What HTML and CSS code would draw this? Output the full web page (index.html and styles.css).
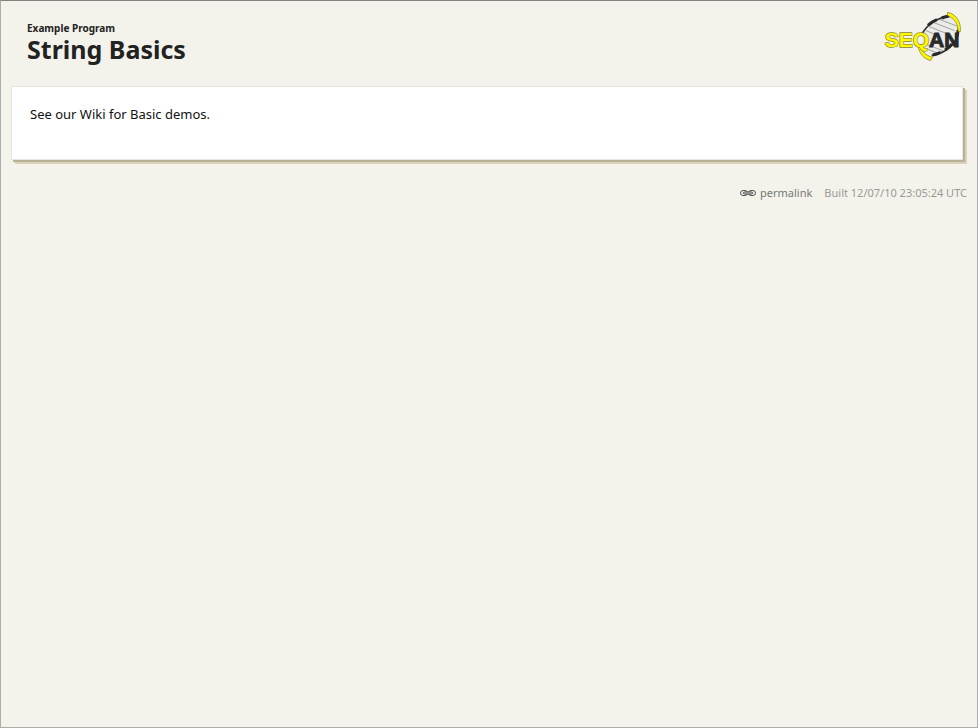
FILE: index.html
```html
<!DOCTYPE html>
<html lang="en">
<head>
<meta charset="utf-8">
<title>String Basics</title>
<link rel="stylesheet" href="styles.css">
</head>
<body>
<header class="header">
  <div class="heading">
    <p class="kind">Example Program</p>
    <h1 class="title">String Basics</h1>
  </div>
  <svg class="logo" viewBox="0 0 270 180" role="img" aria-label="SeqAn">
    <path d="M128 120C128 80 160 38 212 30L240 60C244 100 210 138 161 149Z" fill="#ebebe8"/>
    <path d="M184 40l52 20M168 50l62 24M154 62l60 24M144 74l40 16M138 112l56 22M134 124l44 17" stroke="#a2a29f" stroke-width="3"/>
    <path d="M131 86C144 60 170 38 213 30" fill="none" stroke="#303030" stroke-width="5"/>
    <path d="M150 58C158 50 167 45 177 41M191 36C199 33 206 31 214 30" fill="none" stroke="#292929" stroke-width="9"/>
    <path d="M241 66C242 108 211 139 161 149" fill="none" stroke="#303030" stroke-width="5"/>
    <path d="M164 147C173 145 181 142 188 139M201 132C209 127 216 121 222 114M240 72C240 82 238 90 235 97" fill="none" stroke="#292929" stroke-width="9"/>
    <path d="M209 19C232 24 250 45 247 77L240 76C241 53 229 38 208 28Z" fill="#fff800" stroke="#77741f" stroke-width="2"/>
    <path d="M127 118C131 137 143 148 163 154L158 164C137 158 124 143 120 121Z" fill="#fff800" stroke="#77741f" stroke-width="2"/>
    <text class="wordmark" x="20" y="122"><tspan class="wordmark-seq">SEQ</tspan><tspan class="wordmark-an">AN</tspan></text>
  </svg>
</header>
<main class="card">
  <p>See our Wiki for Basic demos.</p>
</main>
<footer class="footer">
  <a class="permalink" href="#">
    <svg class="chain" viewBox="0 0 16 8" aria-hidden="true">
      <rect x="0.5" y="1.5" width="7" height="5" rx="2.5" fill="#eee" stroke="#555"/>
      <rect x="8.5" y="1.5" width="7" height="5" rx="2.5" fill="#eee" stroke="#555"/>
      <rect x="3.5" y="3" width="9" height="2" rx="1" fill="#ddd" stroke="#444"/>
    </svg>
    <span>permalink</span>
  </a>
  <span>Built 12/07/10 23:05:24 UTC</span>
</footer>
</body>
</html>
```
FILE: styles.css
```css
* {
  box-sizing: border-box;
}

body {
  margin: 0;
  min-height: 100vh;
  padding: 4px 10px 0;
  border: 1px solid #adadad;
  border-top-color: #857f7f;
  background: #f4f3eb;
  color: #222;
  font-family: "Noto Sans", "Open Sans", sans-serif;
}

p,
h1 {
  margin: 0;
}

.header {
  display: flex;
  justify-content: space-between;
  height: 81px;
}

.heading {
  padding: 16px 0 0 16px;
}

.kind {
  font-size: 10px;
  font-weight: 700;
  line-height: 14px;
}

.title {
  font-size: 25px;
  font-weight: 700;
  line-height: 28px;
}

.logo {
  width: 90px;
  height: 60px;
  margin-top: 1px;
  margin-right: -1px;
}

.wordmark {
  font-family: "Liberation Sans", sans-serif;
  font-size: 63px;
  font-weight: 700;
}

.wordmark-seq {
  fill: #fff800;
  stroke: #8a8720;
  stroke-width: 4px;
  paint-order: stroke;
}

.wordmark-an {
  fill: #292929;
  stroke: #292929;
  stroke-width: 3px;
}

.card {
  min-height: 74px;
  margin-right: 4px;
  padding: 18px;
  border: 1px solid #e5e6de;
  background: #fff;
  box-shadow: 2px 2px #b9b194, 4px 4px #d8d2bb;
  color: #111;
  font-size: 13px;
  line-height: 18px;
}

.footer {
  display: flex;
  justify-content: flex-end;
  gap: 12px;
  margin-top: 25px;
  color: #999;
  font-size: 11px;
  line-height: 16px;
}

.permalink {
  display: flex;
  align-items: center;
  gap: 4px;
  color: #777;
  text-decoration: none;
}

.chain {
  width: 16px;
  height: 8px;
}
```
